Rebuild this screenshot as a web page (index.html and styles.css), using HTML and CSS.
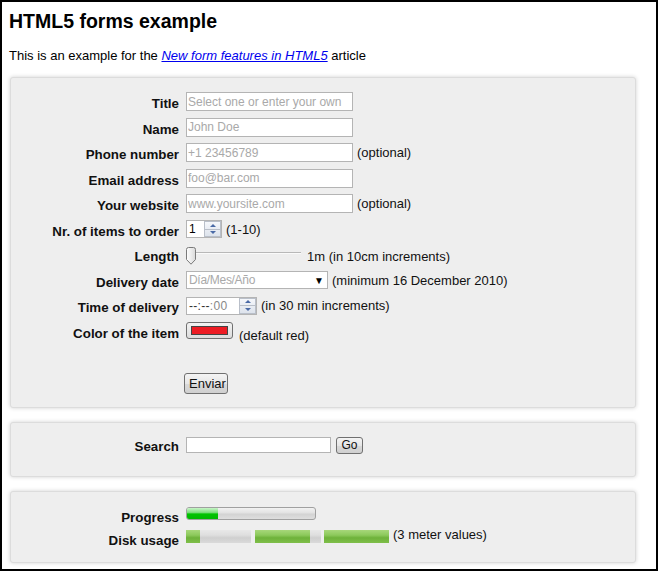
FILE: index.html
```html
<!DOCTYPE html>
<html lang="en">
<head>
<meta charset="utf-8">
<title>HTML5 forms example</title>
<link rel="stylesheet" href="styles.css">
</head>
<body>
<div class="page">
  <h1>HTML5 forms example</h1>
  <p class="intro">This is an example for the <a href="#"><em>New form features in HTML5</em></a> article</p>

  <form class="box box-main">
    <div class="grid">
      <label class="lbl">Title</label>
      <div class="cell"><input class="txt w167" placeholder="Select one or enter your own"></div>

      <label class="lbl">Name</label>
      <div class="cell"><input class="txt w167" placeholder="John Doe"></div>

      <label class="lbl">Phone number</label>
      <div class="cell"><input class="txt w167" placeholder="+1 23456789"><span class="note">(optional)</span></div>

      <label class="lbl">Email address</label>
      <div class="cell"><input class="txt w167" placeholder="foo@bar.com"></div>

      <label class="lbl">Your website</label>
      <div class="cell"><input class="txt w167" placeholder="www.yoursite.com"><span class="note">(optional)</span></div>

      <label class="lbl">Nr. of items to order</label>
      <div class="cell">
        <span class="fake num"><span class="val">1</span><span class="spin"><span class="up"></span><span class="down"></span></span></span>
        <span class="note">(1-10)</span>
      </div>

      <label class="lbl">Length</label>
      <div class="cell">
        <span class="slider">
          <svg class="thumb" width="10" height="18" viewBox="0 0 10 18">
            <defs><linearGradient id="tg" x1="0" y1="0" x2="1" y2="0"><stop offset="0" stop-color="#ffffff"/><stop offset="1" stop-color="#d9d9d9"/></linearGradient></defs>
            <path d="M0.5 2.5 Q0.5 0.5 2.5 0.5 H7.5 Q9.5 0.5 9.5 2.5 V12.5 L5 17.2 L0.5 12.5 Z" fill="url(#tg)" stroke="#7a7a7a"/>
          </svg>
          <span class="track"></span>
        </span>
        <span class="note n-len">1m (in 10cm increments)</span>
      </div>

      <label class="lbl">Delivery date</label>
      <div class="cell">
        <span class="fake date"><span class="ph">Día/Mes/Año</span><span class="arrow">▼</span></span>
        <span class="note">(minimum 16 December 2010)</span>
      </div>

      <label class="lbl">Time of delivery</label>
      <div class="cell">
        <span class="fake time"><span class="val"><span class="dash">--:--</span><span class="sec">:00</span></span><span class="spin"><span class="up"></span><span class="down"></span></span></span>
        <span class="note">(in 30 min increments)</span>
      </div>

      <label class="lbl">Color of the item</label>
      <div class="cell cell-color">
        <span class="color"><span class="swatch"></span></span>
        <span class="note n-color">(default red)</span>
      </div>
    </div>
    <button type="button" class="btn btn-send">Enviar</button>
  </form>

  <form class="box box-search">
    <div class="row-search">
      <label class="lbl">Search</label>
      <div class="cell"><input class="txt search"><button type="button" class="btn btn-go">Go</button></div>
    </div>
  </form>

  <div class="box box-meter">
    <div class="grid2">
      <span class="lbl">Progress</span>
      <div class="cell"><span class="progress"><span class="pfill" style="width:31px"></span></span></div>

      <span class="lbl">Disk usage</span>
      <div class="cell">
        <span class="meter m1"><span class="mfill" style="width:14px"></span></span>
        <span class="meter m2"><span class="mfill" style="width:55px"></span></span>
        <span class="meter m3"><span class="mfill" style="width:65px"></span></span>
        <span class="note n-meter">(3 meter values)</span>
      </div>
    </div>
  </div>
</div>
</body>
</html>
```

FILE: styles.css
```css
html, body {
  margin: 0;
  padding: 0;
}
body {
  width: 658px;
  height: 571px;
  box-sizing: border-box;
  border: 2px solid #000;
  background: #fff;
  font-family: "Liberation Sans", Arial, sans-serif;
  color: #000;
  overflow: hidden;
}
.page {
  padding: 8px 0 0 7px;
}
h1 {
  margin: 0;
  font-size: 19.5px;
  line-height: 23px;
  font-weight: bold;
  color: #000;
}
.intro {
  margin: 15px 0 0 0;
  font-size: 13px;
  line-height: 15px;
}
.intro a {
  color: #0000ee;
}
.box {
  display: block;
  box-sizing: border-box;
  width: 626px;
  margin: 14px 0 0 1px;
  background: #eeeeee;
  border: 1px solid #dcdcdc;
  border-radius: 3px;
  box-shadow: 0 0 4px rgba(0, 0, 0, 0.18);
}
.box-main {
  padding: 14px 0 13px 0;
}
.grid {
  display: grid;
  grid-template-columns: 168px auto;
  column-gap: 7px;
  row-gap: 6.5px;
  grid-auto-rows: 19px;
}
.lbl {
  display: block;
  text-align: right;
  font-weight: bold;
  font-size: 13.33px;
  line-height: 23px;
  height: 19px;
  color: #111;
  white-space: nowrap;
}
.cell {
  display: flex;
  align-items: center;
  height: 19px;
  white-space: nowrap;
}
.note {
  font-size: 13px;
  line-height: 15px;
  margin-left: 4px;
  color: #111;
}
.txt {
  box-sizing: border-box;
  height: 19px;
  margin: 0;
  padding: 0 1px;
  border: 1px solid #b4b4b4;
  background: #fff;
  font-family: "Liberation Sans", Arial, sans-serif;
  font-size: 12px;
  color: #000;
  outline: none;
}
.txt::placeholder {
  color: #a9a9a9;
}
.w167 {
  width: 167px;
}
.fake {
  box-sizing: border-box;
  display: flex;
  align-items: center;
  height: 18px;
  border: 1px solid #b4b4b4;
  background: #fff;
  font-size: 12px;
}
.num {
  width: 36px;
}
.num .val {
  flex: 1;
  padding-left: 2px;
  color: #000;
}
.time {
  width: 71px;
}
.time .val {
  flex: 1;
  padding-left: 2px;
  letter-spacing: 0.3px;
}
.dash {
  color: #333;
}
.sec {
  color: #888;
}
.spin {
  box-sizing: border-box;
  width: 17px;
  height: 16px;
  display: flex;
  flex-direction: column;
  border: 1px solid #b9bfc9;
  background: linear-gradient(#f5f7fb, #dde3ec);
}
.spin .up,
.spin .down {
  flex: 1;
  display: flex;
  align-items: center;
  justify-content: center;
}
.spin .up {
  border-bottom: 1px solid #b9bfc9;
}
.spin .up::before {
  content: "";
  border-left: 3px solid transparent;
  border-right: 3px solid transparent;
  border-bottom: 3px solid #4a6aa6;
}
.spin .down::before {
  content: "";
  border-left: 3px solid transparent;
  border-right: 3px solid transparent;
  border-top: 3px solid #4a6aa6;
}
.slider {
  display: flex;
  align-items: flex-start;
  width: 115px;
  height: 19px;
  margin-top: 4px;
}
.thumb {
  display: block;
  flex: none;
}
.track {
  display: block;
  width: 105px;
  height: 1px;
  margin-top: 5px;
  background: #b8b8b8;
  border-bottom: 1px solid #fafafa;
}
.n-len {
  margin-left: 6px;
  margin-top: 3px;
}
.date {
  width: 142px;
  justify-content: space-between;
  padding: 0 3px 0 2px;
}
.date .ph {
  color: #a9a9a9;
  letter-spacing: -0.3px;
}
.date .arrow {
  font-size: 10px;
  color: #000;
}
.cell-color {
  align-items: flex-start;
}
.color {
  box-sizing: border-box;
  display: flex;
  align-items: center;
  justify-content: center;
  width: 47px;
  height: 17px;
  border: 1px solid #707070;
  border-radius: 3px;
  background: linear-gradient(#f3f3f3, #dcdcdc);
}
.swatch {
  box-sizing: border-box;
  width: 37px;
  height: 9px;
  background: #ed1c24;
  border: 1px solid #444;
}
.n-color {
  margin-left: 6px;
  margin-top: 6px;
}
.btn {
  box-sizing: border-box;
  margin: 0;
  border: 1px solid #707070;
  border-radius: 3px;
  background: linear-gradient(#f4f4f4, #e6e6e6 50%, #d9d9d9 51%, #d0d0d0);
  font-family: "Liberation Sans", Arial, sans-serif;
  font-size: 13px;
  color: #111;
  padding: 0 4px;
}
.btn-send {
  display: block;
  height: 21px;
  width: 44px;
  margin: 32px 0 0 173px;
}
.box-search {
  padding: 14px 0 22px 0;
}
.row-search {
  display: grid;
  grid-template-columns: 168px auto;
  column-gap: 7px;
  height: 17px;
}
.row-search .lbl {
  line-height: 20px;
}
.row-search .cell {
  align-items: flex-start;
}
.search {
  width: 145px;
  height: 16px;
}
.btn-go {
  width: 27px;
  height: 17px;
  margin-left: 5px;
  padding: 0;
  font-size: 12px;
}
.box-meter {
  padding: 15px 0 19px 0;
}
.grid2 {
  display: grid;
  grid-template-columns: 168px auto;
  column-gap: 7px;
  grid-template-rows: 13px 13px;
  row-gap: 10px;
}
.grid2 .lbl {
  height: 13px;
  line-height: 21px;
}
.grid2 .cell {
  height: 13px;
}
.progress {
  box-sizing: border-box;
  display: block;
  width: 130px;
  height: 13px;
  border: 1px solid #a0a0a0;
  border-radius: 3px;
  background: linear-gradient(#f2f2f2, #e2e2e2 45%, #d3d3d3 55%, #dedede);
  overflow: hidden;
}
.pfill {
  display: block;
  height: 100%;
  background: linear-gradient(#c8f5c8, #7fe07f 40%, #00c400 55%, #00b800);
}
.meter {
  display: block;
  width: 65px;
  height: 13px;
  background: linear-gradient(#e8e8e8, #dedede 40%, #cfcfcf 60%, #dadada);
  overflow: hidden;
}
.m2 {
  margin-left: 4px;
  width: 66px;
}
.m3 {
  margin-left: 3px;
}
.mfill {
  display: block;
  height: 100%;
  background: linear-gradient(#a7d77a, #8cc95b 40%, #6eb23a 60%, #7fbf4a);
}
.n-meter {
  margin-left: 4px;
  margin-top: -3px;
}
```
